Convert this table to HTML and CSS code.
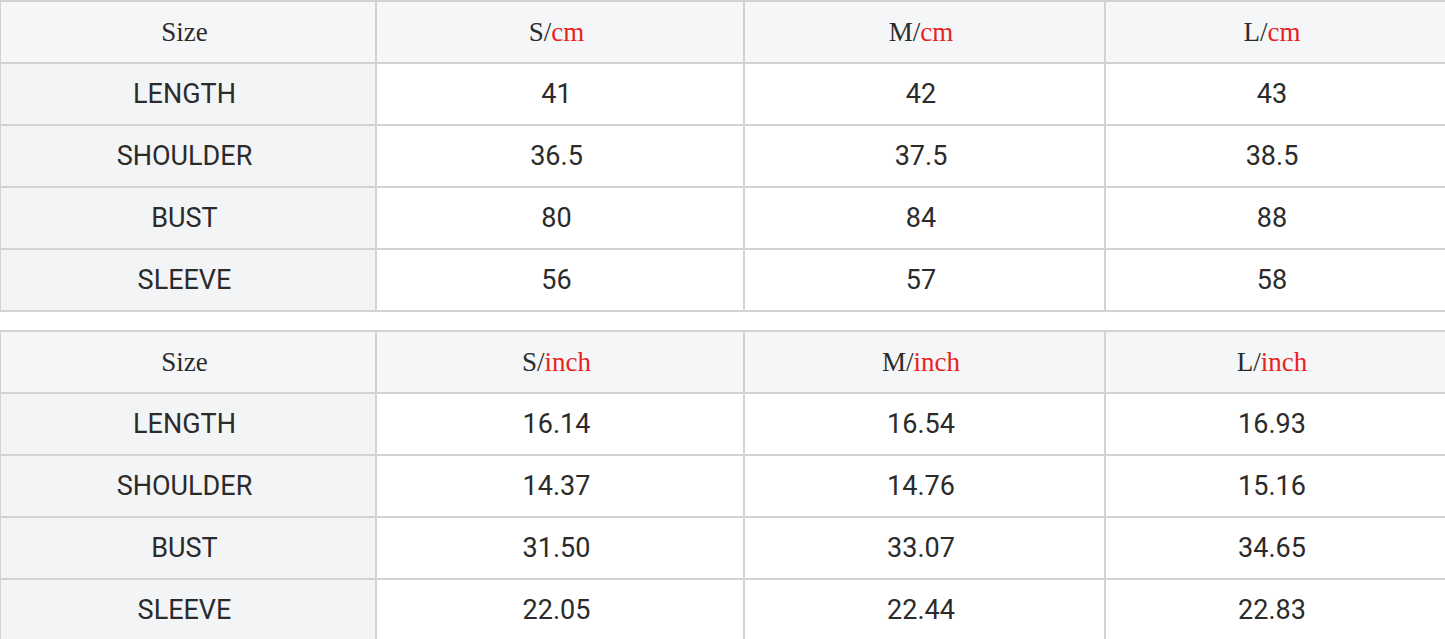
FILE: index.html
```html
<!DOCTYPE html>
<html>
<head>
<meta charset="utf-8">
<link rel="stylesheet" href="styles.css">
</head>
<body>
<div class="wrap">
<table class="size-table">
<colgroup><col class="c1"><col class="c2"><col class="c3"><col class="c4"></colgroup>
<tr class="head"><th>Size</th><th>S/<span class="unit">cm</span></th><th>M/<span class="unit">cm</span></th><th>L/<span class="unit">cm</span></th></tr>
<tr><th class="label">LENGTH</th><td>41</td><td>42</td><td>43</td></tr>
<tr><th class="label">SHOULDER</th><td>36.5</td><td>37.5</td><td>38.5</td></tr>
<tr><th class="label">BUST</th><td>80</td><td>84</td><td>88</td></tr>
<tr><th class="label">SLEEVE</th><td>56</td><td>57</td><td>58</td></tr>
</table>
<table class="size-table">
<colgroup><col class="c1"><col class="c2"><col class="c3"><col class="c4"></colgroup>
<tr class="head"><th>Size</th><th>S/<span class="unit">inch</span></th><th>M/<span class="unit">inch</span></th><th>L/<span class="unit">inch</span></th></tr>
<tr><th class="label">LENGTH</th><td>16.14</td><td>16.54</td><td>16.93</td></tr>
<tr><th class="label">SHOULDER</th><td>14.37</td><td>14.76</td><td>15.16</td></tr>
<tr><th class="label">BUST</th><td>31.50</td><td>33.07</td><td>34.65</td></tr>
<tr><th class="label">SLEEVE</th><td>22.05</td><td>22.44</td><td>22.83</td></tr>
</table>
</div>
</body>
</html>
```
FILE: styles.css
```css
html, body { margin: 0; padding: 0; background: #fff; }
.wrap { display: flex; flex-direction: column; gap: 18px; margin-left: -1px; width: 1446px; }
.size-table {
  border-collapse: collapse;
  table-layout: fixed;
  width: 1446px;
  color: #2b2b2b;
}
.c1 { width: 376px; }
.c2 { width: 368px; }
.c3 { width: 361px; }
.c4 { width: 341px; }
.size-table th, .size-table td {
  border: 2px solid #d2d2d2;
  height: 60px;
  padding: 0 7px 0 0;
  text-align: center;
  vertical-align: middle;
  font-family: Roboto, "Liberation Sans", sans-serif;
  font-size: 27px;
  font-weight: normal;
}
.size-table .head th {
  background: #f5f6f8;
  font-family: "Liberation Serif", "Times New Roman", serif;
  font-size: 27px;
  color: #2b2b2b;
}
.size-table th.label { background: #f3f4f6; }
.unit { color: #e8231c; }
```
